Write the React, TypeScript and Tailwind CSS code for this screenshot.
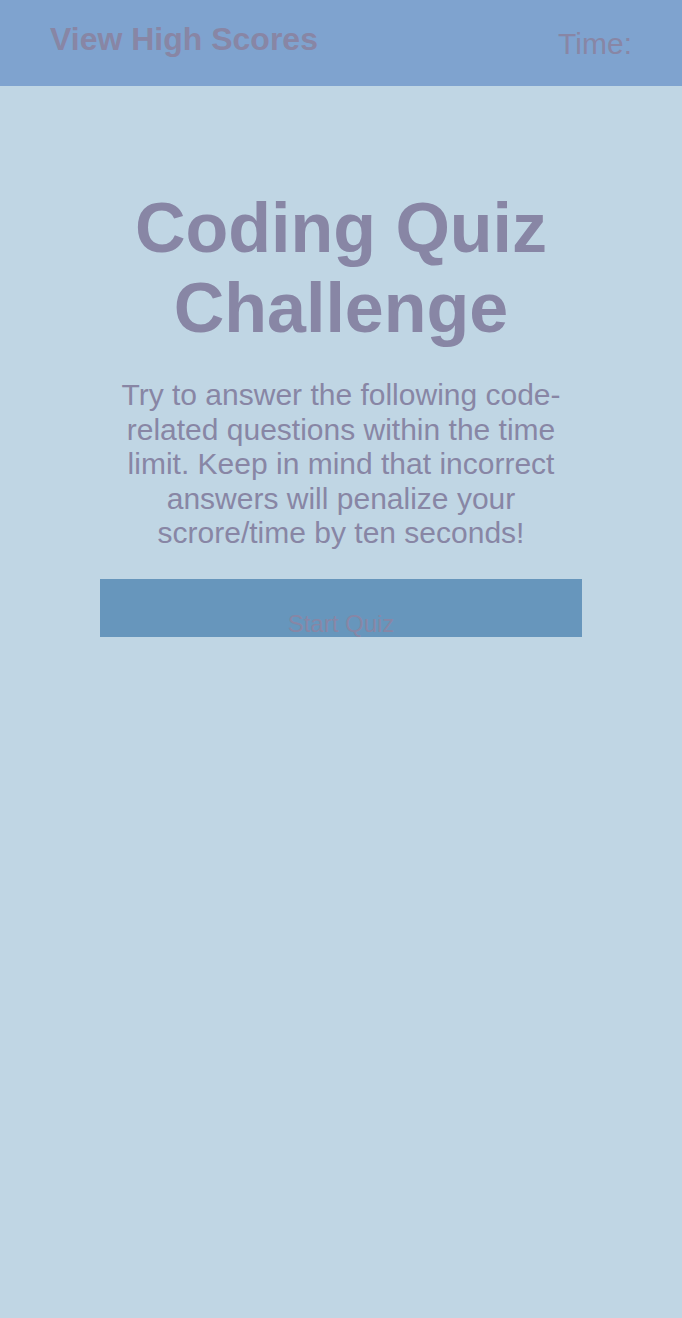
import React from 'react';

export default function App() {
  return (
    <div
      className="min-h-[1318px] bg-[#c0d6e4] text-[#8886a5]"
      style={{ fontFamily: '"Liberation Sans", Arial, sans-serif' }}
    >
      <header className="h-[86px] bg-[#7fa3cf] flex items-start justify-between px-[50px]">
        <a className="mt-[21px] text-[32px] font-bold leading-[37px]">View High Scores</a>
        <div className="mt-[27px] text-[30px] leading-[34px]">Time:</div>
      </header>

      <main className="w-[482px] mx-auto pt-[102px] text-center">
        <h1 className="text-[70px] font-bold leading-[80px]">Coding Quiz Challenge</h1>
        <p className="mt-[30px] text-[30px] leading-[34.5px]">
          Try to answer the following code-related questions within the time limit. Keep in mind
          that incorrect answers will penalize your scrore/time by ten seconds!
        </p>
        <button className="mt-[28px] w-full h-[58px] bg-[#6796bc] flex items-end justify-center text-[24px] leading-[27px] text-[#8886a5]">
          Start Quiz
        </button>
      </main>
    </div>
  );
}
